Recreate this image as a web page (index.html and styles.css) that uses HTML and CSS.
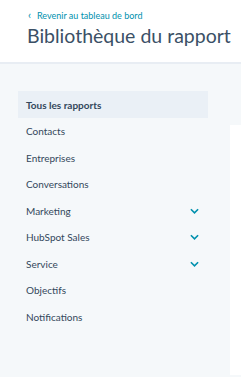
FILE: index.html
```html
<!DOCTYPE html>
<html lang="fr">
<head>
<meta charset="utf-8">
<link rel="stylesheet" href="styles.css">
</head>
<body>
<header class="header">
  <a class="back" href="#"><span class="back-icon">‹</span>Revenir au tableau de bord</a>
  <h1 class="title">Bibliothèque du rapport</h1>
</header>
<div class="main">
  <nav class="sidebar">
    <div class="item active">Tous les rapports</div>
    <div class="item">Contacts</div>
    <div class="item">Entreprises</div>
    <div class="item">Conversations</div>
    <div class="item">Marketing<svg class="chev" viewBox="0 0 10 6"><path d="M1 1l4 4 4-4"/></svg></div>
    <div class="item">HubSpot Sales<svg class="chev" viewBox="0 0 10 6"><path d="M1 1l4 4 4-4"/></svg></div>
    <div class="item">Service<svg class="chev" viewBox="0 0 10 6"><path d="M1 1l4 4 4-4"/></svg></div>
    <div class="item">Objectifs</div>
    <div class="item">Notifications</div>
  </nav>
  <section class="panel"></section>
</div>
</body>
</html>
```
FILE: styles.css
```css
html, body { margin: 0; padding: 0; }
body {
  background: #f5f8fa;
  font-family: Lato, "Open Sans", sans-serif;
  color: #33475b;
  height: 377px;
  overflow: hidden;
}
.header {
  background: #fff;
  height: 64px;
  border-bottom: 2px solid #e8edf3;
  padding-left: 27px;
  box-sizing: border-box;
  padding-top: 9px;
}
.back {
  display: flex;
  align-items: center;
  color: #0091ae;
  font-size: 9px;
  text-decoration: none;
  height: 12px;
}
.back-icon {
  font-size: 11px;
  width: 9px;
  margin-left: 1px;
  line-height: 12px;
}
.title {
  margin: 3px 0 0;
  font-weight: 400;
  font-size: 19.5px;
  line-height: 24px;
  color: #3b5066;
  white-space: nowrap;
}
.main {
  display: flex;
  height: 311px;
}
.sidebar {
  width: 190px;
  margin-left: 18px;
  padding-top: 27px;
  flex: none;
}
.item {
  display: flex;
  align-items: center;
  justify-content: space-between;
  height: 26.5px;
  padding: 1px 9px 0 8px;
  box-sizing: border-box;
  font-size: 10px;
  color: #33475b;
}
.item.active {
  background: #eaf0f6;
  font-weight: 700;
}
.chev {
  width: 9px;
  height: 6px;
  fill: none;
  stroke: #0091ae;
  stroke-width: 1.8;
}
.panel {
  flex: 1;
  margin-left: 22px;
  margin-top: 61px;
  background: #fff;
}
```
